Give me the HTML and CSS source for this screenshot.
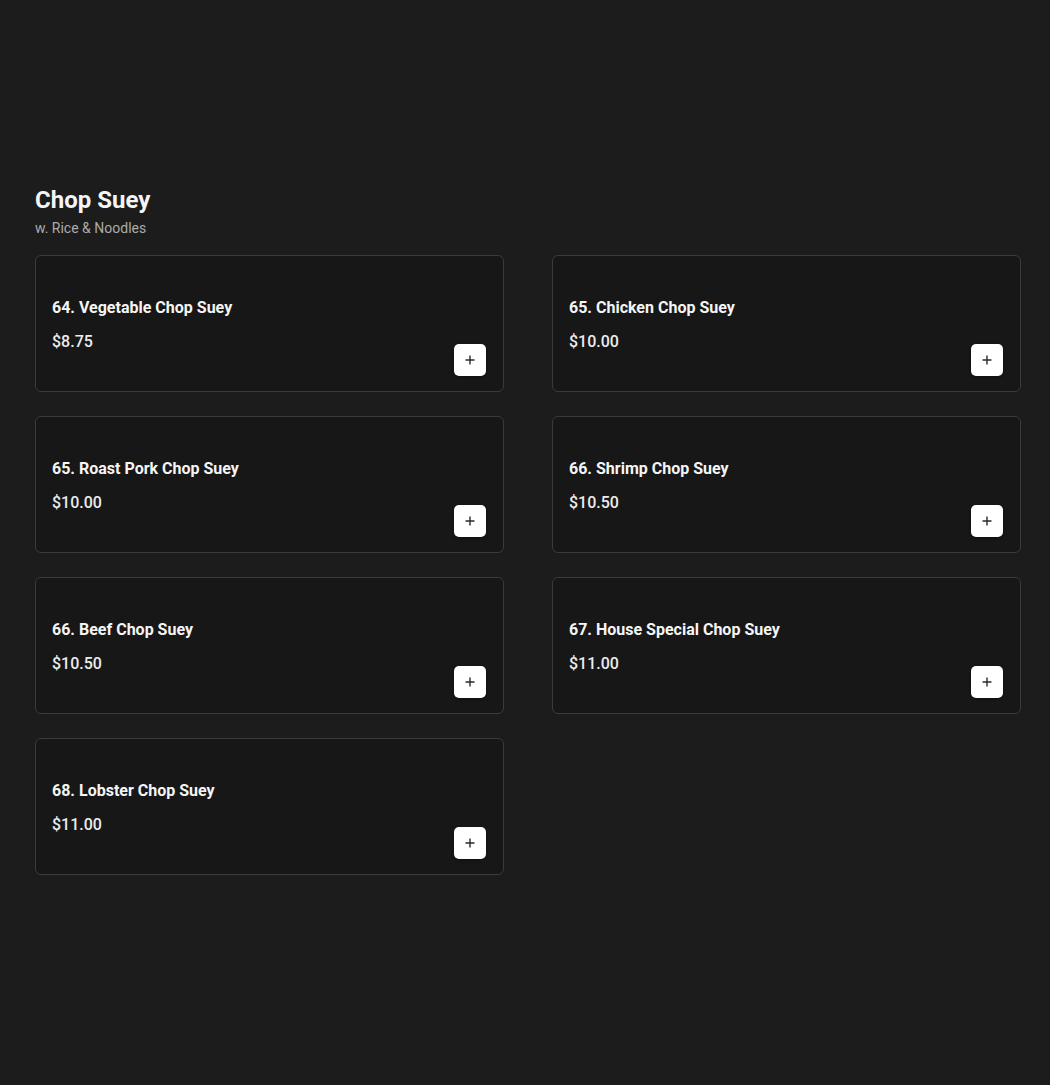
FILE: index.html
```html
<!DOCTYPE html>
<html lang="en">
<head>
<meta charset="utf-8">
<title>Chop Suey</title>
<link rel="stylesheet" href="styles.css">
</head>
<body>
<main class="page">
  <section class="category">
    <header class="cat-head">
      <h2 class="cat-title">Chop Suey</h2>
      <p class="cat-sub">w. Rice &amp; Noodles</p>
    </header>
    <div class="grid">
      <article class="card">
        <div class="info"><h3 class="name">64. Vegetable Chop Suey</h3><div class="price">$8.75</div></div>
        <button class="add" aria-label="Add"><svg viewBox="0 0 12 12" width="12" height="12"><path d="M6 1.5v9M1.5 6h9" stroke="#2b2b2b" stroke-width="1.4" fill="none"/></svg></button>
      </article>
      <article class="card">
        <div class="info"><h3 class="name">65. Chicken Chop Suey</h3><div class="price">$10.00</div></div>
        <button class="add" aria-label="Add"><svg viewBox="0 0 12 12" width="12" height="12"><path d="M6 1.5v9M1.5 6h9" stroke="#2b2b2b" stroke-width="1.4" fill="none"/></svg></button>
      </article>
      <article class="card">
        <div class="info"><h3 class="name">65. Roast Pork Chop Suey</h3><div class="price">$10.00</div></div>
        <button class="add" aria-label="Add"><svg viewBox="0 0 12 12" width="12" height="12"><path d="M6 1.5v9M1.5 6h9" stroke="#2b2b2b" stroke-width="1.4" fill="none"/></svg></button>
      </article>
      <article class="card">
        <div class="info"><h3 class="name">66. Shrimp Chop Suey</h3><div class="price">$10.50</div></div>
        <button class="add" aria-label="Add"><svg viewBox="0 0 12 12" width="12" height="12"><path d="M6 1.5v9M1.5 6h9" stroke="#2b2b2b" stroke-width="1.4" fill="none"/></svg></button>
      </article>
      <article class="card">
        <div class="info"><h3 class="name">66. Beef Chop Suey</h3><div class="price">$10.50</div></div>
        <button class="add" aria-label="Add"><svg viewBox="0 0 12 12" width="12" height="12"><path d="M6 1.5v9M1.5 6h9" stroke="#2b2b2b" stroke-width="1.4" fill="none"/></svg></button>
      </article>
      <article class="card">
        <div class="info"><h3 class="name">67. House Special Chop Suey</h3><div class="price">$11.00</div></div>
        <button class="add" aria-label="Add"><svg viewBox="0 0 12 12" width="12" height="12"><path d="M6 1.5v9M1.5 6h9" stroke="#2b2b2b" stroke-width="1.4" fill="none"/></svg></button>
      </article>
      <article class="card">
        <div class="info"><h3 class="name">68. Lobster Chop Suey</h3><div class="price">$11.00</div></div>
        <button class="add" aria-label="Add"><svg viewBox="0 0 12 12" width="12" height="12"><path d="M6 1.5v9M1.5 6h9" stroke="#2b2b2b" stroke-width="1.4" fill="none"/></svg></button>
      </article>
    </div>
  </section>
</main>
</body>
</html>
```

FILE: styles.css
```css
html, body {
  margin: 0;
  padding: 0;
  background: #1c1c1c;
  color: #f2f2f2;
  font-family: Roboto, "Liberation Sans", Arial, sans-serif;
}

.page {
  padding: 184px 29px 0 35px;
}

.cat-head {
  margin-bottom: 17px;
}

.cat-title {
  margin: 0;
  font-size: 24px;
  line-height: 32px;
  font-weight: 700;
  color: #f5f5f5;
}

.cat-sub {
  margin: 2px 0 0;
  font-size: 14px;
  line-height: 20px;
  color: #ababab;
}

.grid {
  display: grid;
  grid-template-columns: 469px 469px;
  column-gap: 48px;
  row-gap: 24px;
}

.card {
  box-sizing: border-box;
  height: 137px;
  background: #171717;
  border: 1px solid #3b3b3b;
  border-radius: 6px;
  padding: 16px 17px 15px 16px;
  display: flex;
  justify-content: space-between;
}

.info {
  padding-top: 24px;
}

.name {
  margin: 0;
  font-size: 16px;
  line-height: 24px;
  font-weight: 700;
  color: #f5f5f5;
}

.price {
  margin-top: 10px;
  font-size: 16px;
  line-height: 24px;
  font-weight: 500;
  color: #ececec;
}

.add {
  align-self: flex-end;
  width: 32px;
  height: 32px;
  padding: 0;
  border: none;
  border-radius: 5px;
  background: #ffffff;
  box-shadow: 0 1px 3px rgba(0, 0, 0, 0.4);
  display: flex;
  align-items: center;
  justify-content: center;
  cursor: pointer;
}
```
